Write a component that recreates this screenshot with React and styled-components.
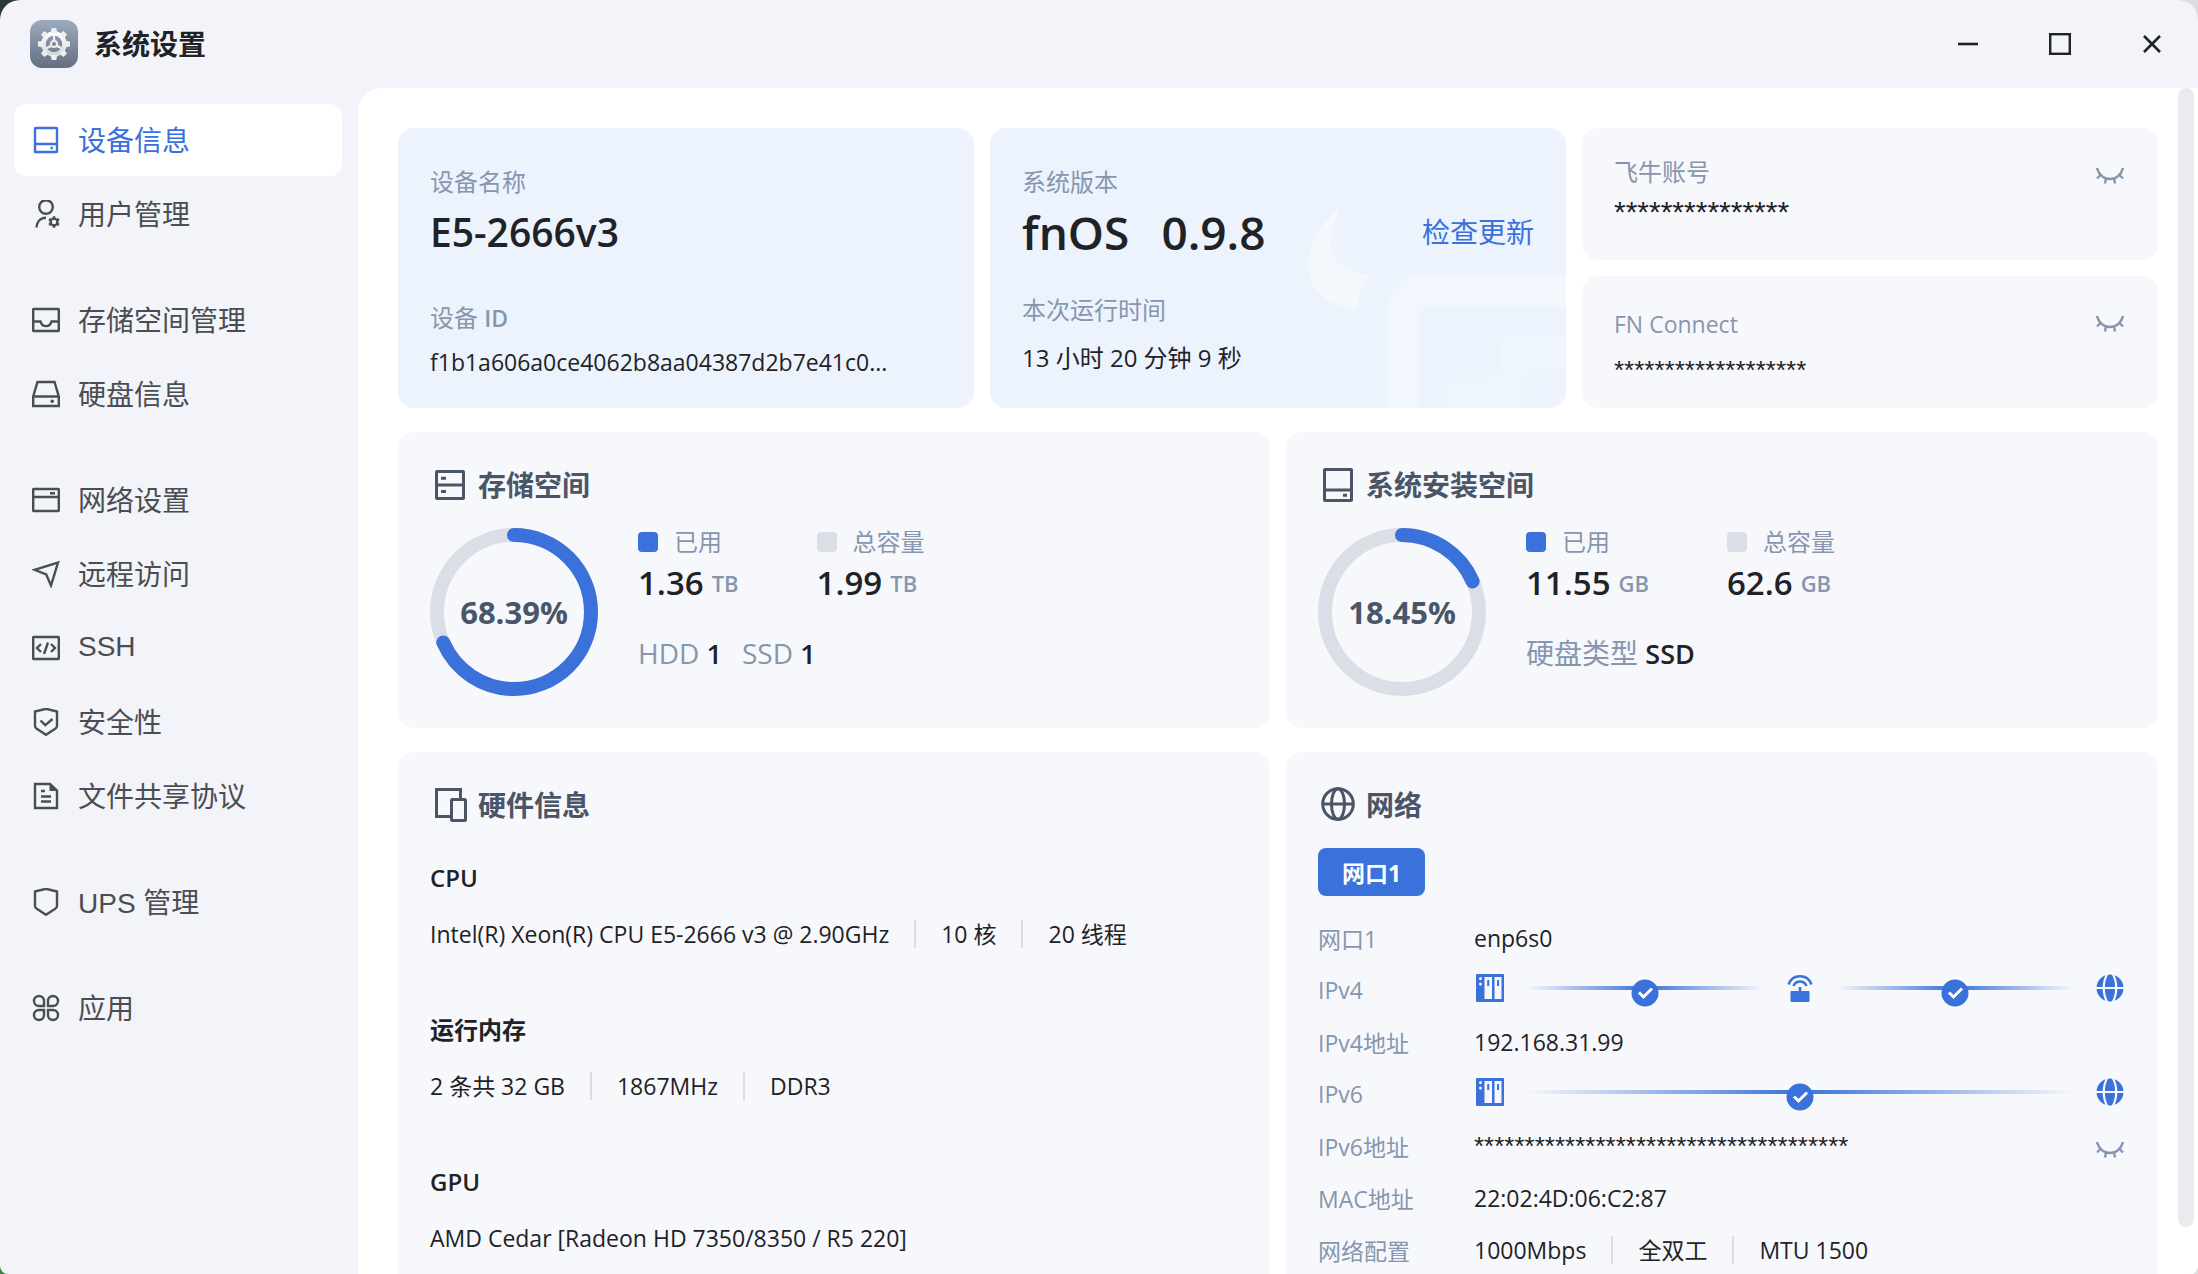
import { useState } from "react";
import styled, { createGlobalStyle } from "styled-components";

const NAV_GROUPS = [
  [
    { id: "device", label: "设备信息" },
    { id: "user", label: "用户管理" },
  ],
  [
    { id: "storage", label: "存储空间管理" },
    { id: "disk", label: "硬盘信息" },
  ],
  [
    { id: "network", label: "网络设置" },
    { id: "remote", label: "远程访问" },
    { id: "ssh", label: "SSH" },
    { id: "security", label: "安全性" },
    { id: "share", label: "文件共享协议" },
  ],
  [{ id: "ups", label: "UPS 管理" }],
  [{ id: "apps", label: "应用" }],
];

const HARDWARE = [
  {
    title: "CPU",
    specs: ["Intel(R) Xeon(R) CPU E5-2666 v3 @ 2.90GHz", "10 核", "20 线程"],
  },
  { title: "运行内存", specs: ["2 条共 32 GB", "1867MHz", "DDR3"] },
  { title: "GPU", specs: ["AMD Cedar [Radeon HD 7350/8350 / R5 220]"] },
];

const SHIELD = "M14 .8 25 3.5V18c0 1.500-.8 2.200-1.800 2.800L14 26.800l-9.200-6C3.800 20.200 3 19.500 3 18V3.500z";

const NAV_ICONS = {
  device: (
    <>
      <rect x="3" y="2" width="22" height="24" rx="0.5" />
      <path d="M3 18h22" />
      <rect x="18.5" y="20.8" width="2.4" height="2.4" fill="currentColor" stroke="none" />
    </>
  ),
  user: (
    <>
      <circle cx="14" cy="7" r="6.8" />
      <path d="M4.5 27.5C4.8 21.5 8.6 17.8 14 17.8" />
      <circle cx="22" cy="22" r="3.4" strokeWidth="2.4" />
      <path
        d="M22 16.2v2M22 25.8v2M17 19.1l1.7 1M25.3 23.9l1.7 1M17 24.9l1.7-1M25.3 20.1l1.7-1"
        strokeWidth="2.6"
      />
    </>
  ),
  storage: (
    <>
      <rect x="1.2" y="3" width="25.6" height="22" rx="0.5" />
      <path d="M1.2 15.5h7.3c.8 3.2 3 4.6 5.5 4.6s4.7-1.4 5.5-4.6h7.3" />
    </>
  ),
  disk: (
    <>
      <path d="M5.5 2h17l4.3 14.5V26H1.2v-9.5zM1.2 16.5h25.6" />
      <circle cx="20.2" cy="21.3" r="1.8" fill="currentColor" stroke="none" />
    </>
  ),
  network: (
    <>
      <rect x="1.2" y="3" width="25.6" height="22" rx="0.5" />
      <path d="M1.2 11h25.6M18 7.200h5" />
    </>
  ),
  remote: <path d="M2.5 9.8 26 2.5 19 25.5l-4.800-11z" />,
  ssh: (
    <>
      <rect x="1.2" y="3" width="25.6" height="22" rx="0.5" />
      <path d="M9 10l-4 4 4 4M19 10l4 4-4 4M16 8.5l-4 11.500" />
    </>
  ),
  security: (
    <>
      <path d={SHIELD} />
      <path d="M8.500 12.500l4.800 4.600L20.500 11" />
    </>
  ),
  share: (
    <>
      <path d="M3 2h15l7 6.500V26H3z" />
      <path d="M17.500 2v7H25z" fill="currentColor" stroke="none" />
      <path d="M9 9h4M9 14.500h10M9 19.500h10" />
    </>
  ),
  ups: <path d={SHIELD} />,
  apps: (
    <>
      <path d="M12 12H7a5 5 0 1 1 5-5zM16 12h5a5 5 0 1 0-5-5z" />
      <path d="M12 16H7a5 5 0 1 0 5 5zM16 16h5a5 5 0 1 1-5 5z" />
    </>
  ),
};

const SECTION_ICONS = {
  storage: (
    <>
      <rect x="6.5" y="5.5" width="27" height="27" rx="0.5" />
      <path d="M6 19h28M11 12.200h5M11 25.500h5" />
    </>
  ),
  system: (
    <>
      <rect x="6.5" y="3.5" width="27" height="31" rx="0.5" />
      <path d="M6 24h28M25 29.200h4" />
    </>
  ),
  hardware: (
    <>
      <path d="M30.5 12V3.500h-24v27H20" />
      <rect x="21.5" y="13.5" width="14" height="21" rx="1" />
    </>
  ),
  globe: (
    <>
      <circle cx="20" cy="18" r="15.300" />
      <ellipse cx="20" cy="18" rx="6.500" ry="15.300" />
      <path d="M5 18h30" />
    </>
  ),
};

const AppLogo = () => (
  <svg width="48" height="48" viewBox="0 0 48 48" aria-hidden="true">
    <defs>
      <linearGradient id="logo-bg" x1="0" y1="0" x2="0" y2="1">
        <stop offset="0" stopColor="#9dabbf" />
        <stop offset="1" stopColor="#646f7e" />
      </linearGradient>
      <linearGradient id="logo-gear" x1="0" y1="0" x2="0" y2="1">
        <stop offset="0" stopColor="#ffffff" />
        <stop offset="1" stopColor="#d5d7db" />
      </linearGradient>
    </defs>
    <rect width="48" height="48" rx="12" fill="url(#logo-bg)" />
    <circle cx="24" cy="24" r="10.5" fill="none" stroke="url(#logo-gear)" strokeWidth="4.500" />
    <g fill="#eceef0">
      {[0, 45, 90, 135, 180, 225, 270, 315].map((angle) => (
        <path key={angle} d="M20.8 13l.8-5h4.800l.8 5z" transform={`rotate(${angle} 24 24)`} />
      ))}
      {[0, 120, 240].map((angle) => (
        <path key={angle} d="M22.600 22l.5-7h1.800l.5 7z" transform={`rotate(${angle} 24 24)`} />
      ))}
    </g>
    <circle cx="24" cy="24" r="3" fill="#7b8798" stroke="#eceef0" strokeWidth="2" />
  </svg>
);

const ClosedEye = () => (
  <svg width="28" height="16" viewBox="0 0 28 16" fill="none" stroke="currentColor" strokeWidth="2.4">
    <path d="M1 0C2.8 6.800 8 11 14 11S25.200 6.800 27 0" />
    <path d="M5 6.500l-4 4M23 6.500l4 4M10 10.500l-1 5M18 10.500l1 5" />
  </svg>
);

const NasIcon = () => (
  <svg width="32" height="32" viewBox="0 0 32 32" fill="#3a71da" aria-hidden="true">
    <rect x="2" y="2" width="28" height="28" rx="1" />
    <path d="M10.500 5h7.500v22h-7.500zM20.500 5h7v22h-7z" fill="#f6f8fc" />
    <circle cx="6.500" cy="6.500" r="1.500" fill="#f6f8fc" />
    <circle cx="6.500" cy="12" r="1.500" fill="#f6f8fc" />
    <path d="M13.200 8h2v6h-2zM23 8h2v6h-2z" />
  </svg>
);

const RouterIcon = () => (
  <svg width="32" height="32" viewBox="0 0 32 32" fill="none" stroke="#3a71da" strokeWidth="2.6" aria-hidden="true">
    <path d="M4.500 12.500C6.500 7 10.500 4.200 16 4.200S25.500 7 27.500 12.500" />
    <path d="M9.500 14c1.200-3 3.500-4.500 6.500-4.500s5.300 1.500 6.500 4.500M16 15v5" />
    <rect x="6.500" y="19" width="19" height="11" rx="1" fill="#3a71da" stroke="none" />
  </svg>
);

const InternetIcon = () => (
  <svg width="32" height="32" viewBox="0 0 32 32" fill="none" stroke="#f6f8fc" strokeWidth="2.2" aria-hidden="true">
    <circle cx="16" cy="16" r="13.500" fill="#3a71da" stroke="none" />
    <path d="M2 16h28M13.500 1.500C8.500 10 8.500 22 13.500 30.500M18.500 1.500c5 8.500 5 20.500 0 29" />
  </svg>
);

const Watermark = () => (
  <WatermarkSvg viewBox="0 0 576 280" width="576" height="280" aria-hidden="true">
    <path
      d="M350 78C335 92 318 115 318 137c0 27 22 43 50 43 0-14 4-25 12-34-25-1-39-12-39-31 0-13 5-27 9-37z"
      opacity="0.45"
    />
    <path d="M576 146H437c-24 0-40 16-40 40v94h32v-91c0-6 4-10 10-10h137z" opacity="0.3" />
    <path
      d="M576 208h-53c-9 0-14 5-14 14v16c0 8-4 12-12 12h-21c-13 0-20 7-20 20v10h80v-30c0-5 3-8 8-8 12 0 22-2 32-7z"
      opacity="0.2"
    />
  </WatermarkSvg>
);

const UsageRing = ({ percent }) => {
  const length = 2 * Math.PI * 77;
  return (
    <Ring>
      <svg width="168" height="168" viewBox="0 0 168 168" fill="none" strokeWidth="14" aria-hidden="true">
        <circle cx="84" cy="84" r="77" stroke="#dbdee6" />
        <circle
          cx="84"
          cy="84"
          r="77"
          stroke="#3a71da"
          strokeLinecap="round"
          strokeDasharray={`${(length * percent) / 100} ${length}`}
          transform="rotate(-90 84 84)"
        />
      </svg>
      <RingText>{percent}%</RingText>
    </Ring>
  );
};

const SectionHeading = ({ icon, children }) => (
  <SectionTitle>
    <svg width="40" height="38" viewBox="0 0 40 38" fill="none" stroke="currentColor" strokeWidth="3" aria-hidden="true">
      {SECTION_ICONS[icon]}
    </svg>
    {children}
  </SectionTitle>
);

const UsageCard = ({ icon, title, percent, used, total, unit, details }) => (
  <Card>
    <SectionHeading icon={icon}>{title}</SectionHeading>
    <UsageBody>
      <UsageRing percent={percent} />
      <div>
        <Stats>
          <div>
            <Legend $color="#3a71da">已用</Legend>
            <Amount>
              {used} <Unit>{unit}</Unit>
            </Amount>
          </div>
          <div>
            <Legend $color="#dbdee6">总容量</Legend>
            <Amount>
              {total} <Unit>{unit}</Unit>
            </Amount>
          </div>
        </Stats>
        <Details>
          {details.map(([name, value]) => (
            <span key={name}>
              {name} <strong>{value}</strong>
            </span>
          ))}
        </Details>
      </div>
    </UsageBody>
  </Card>
);

const LinkLine = () => (
  <Line>
    <Check width="28" height="28" viewBox="0 0 28 28" role="img" aria-label="已连接">
      <circle cx="14" cy="14" r="13.500" fill="#3a71da" />
      <path d="M8 13.500l4.500 4.500 8.500-8.500" fill="none" stroke="#fff" strokeWidth="3" />
    </Check>
  </Line>
);

const SecretCard = ({ label, secret, large }) => (
  <SmallCard>
    <SecretText $large={large}>
      <Label>{large ? label : <LatinText>{label}</LatinText>}</Label>
      <Stars $large={large}>{secret}</Stars>
    </SecretText>
    <EyeButton aria-label={`显示${label}`}>
      <ClosedEye />
    </EyeButton>
  </SmallCard>
);

export default function App() {
  const [active, setActive] = useState("device");

  return (
    <>
      <GlobalStyle />
      <Window>
        <TitleBar>
          <AppLogo />
          <AppTitle>系统设置</AppTitle>
          <WindowButton aria-label="最小化">
            <svg width="20" height="20" viewBox="0 0 20 20" stroke="currentColor" strokeWidth="2.6">
              <path d="M0 10h20" />
            </svg>
          </WindowButton>
          <WindowButton aria-label="最大化">
            <svg width="22" height="22" viewBox="0 0 22 22" fill="none" stroke="currentColor" strokeWidth="2.4">
              <rect x="1.2" y="1.2" width="19.6" height="19.6" />
            </svg>
          </WindowButton>
          <WindowButton aria-label="关闭">
            <svg width="18" height="18" viewBox="0 0 18 18" stroke="currentColor" strokeWidth="2.6">
              <path d="M1 1l16 16M17 1L1 17" />
            </svg>
          </WindowButton>
        </TitleBar>

        <Sidebar>
          {NAV_GROUPS.map((group) => (
            <NavGroup key={group[0].id}>
              {group.map((item) => (
                <NavItem key={item.id} $active={item.id === active} onClick={() => setActive(item.id)}>
                  <svg width="28" height="28" viewBox="0 0 28 28" fill="none" stroke="currentColor" strokeWidth="2.4" aria-hidden="true">
                    {NAV_ICONS[item.id]}
                  </svg>
                  <NavLabel>{item.label}</NavLabel>
                </NavItem>
              ))}
            </NavGroup>
          ))}
        </Sidebar>

        <Content>
          <Scroller>
            <TopRow>
              <InfoCard>
                <Label>设备名称</Label>
                <DeviceName>E5-2666v3</DeviceName>
                <InfoBottom>
                  <Label>
                    设备 <LatinText $bold>ID</LatinText>
                  </Label>
                  <DeviceId>f1b1a606a0ce4062b8aa04387d2b7e41c0...</DeviceId>
                </InfoBottom>
              </InfoCard>

              <InfoCard>
                <Watermark />
                <Label>系统版本</Label>
                <VersionRow>
                  <Version>
                    <span>fnOS</span>
                    <span>0.9.8</span>
                  </Version>
                  <UpdateLink href="#update">检查更新</UpdateLink>
                </VersionRow>
                <InfoBottom $tight>
                  <Label>本次运行时间</Label>
                  <Uptime>13 小时 20 分钟 9 秒</Uptime>
                </InfoBottom>
              </InfoCard>

              <SmallCards>
                <SecretCard label="飞牛账号" secret={"*".repeat(15)} large />
                <SecretCard label="FN Connect" secret={"*".repeat(19)} />
              </SmallCards>
            </TopRow>

            <HalfRow>
              <UsageCard
                icon="storage"
                title="存储空间"
                percent={68.39}
                used="1.36"
                total="1.99"
                unit="TB"
                details={[
                  ["HDD", "1"],
                  ["SSD", "1"],
                ]}
              />
              <UsageCard
                icon="system"
                title="系统安装空间"
                percent={18.45}
                used="11.55"
                total="62.6"
                unit="GB"
                details={[["硬盘类型", "SSD"]]}
              />
            </HalfRow>

            <HalfRow>
              <Card>
                <SectionHeading icon="hardware">硬件信息</SectionHeading>
                <HardwareList>
                  {HARDWARE.map((part) => (
                    <div key={part.title}>
                      <HardwareTitle>{part.title}</HardwareTitle>
                      <Specs>
                        {part.specs.map((spec) => (
                          <li key={spec}>{spec}</li>
                        ))}
                      </Specs>
                    </div>
                  ))}
                </HardwareList>
              </Card>

              <Card>
                <SectionHeading icon="globe">网络</SectionHeading>
                <PortButton>网口1</PortButton>
                <NetList>
                  <dt>网口1</dt>
                  <dd>enp6s0</dd>
                  <dt>IPv4</dt>
                  <dd>
                    <NetPath>
                      <NasIcon />
                      <LinkLine />
                      <RouterIcon />
                      <LinkLine />
                      <InternetIcon />
                    </NetPath>
                  </dd>
                  <dt>IPv4地址</dt>
                  <dd>192.168.31.99</dd>
                  <dt>IPv6</dt>
                  <dd>
                    <NetPath>
                      <NasIcon />
                      <LinkLine />
                      <InternetIcon />
                    </NetPath>
                  </dd>
                  <dt>IPv6地址</dt>
                  <dd>
                    <Stars>{"*".repeat(37)}</Stars>
                    <EyeButton aria-label="显示IPv6地址">
                      <ClosedEye />
                    </EyeButton>
                  </dd>
                  <dt>MAC地址</dt>
                  <dd>22:02:4D:06:C2:87</dd>
                  <dt>网络配置</dt>
                  <dd>
                    <Specs>
                      <li>1000Mbps</li>
                      <li>全双工</li>
                      <li>MTU 1500</li>
                    </Specs>
                  </dd>
                </NetList>
              </Card>
            </HalfRow>
          </Scroller>
          <ScrollThumb />
        </Content>
      </Window>
    </>
  );
}

const GlobalStyle = createGlobalStyle`
  * {
    box-sizing: border-box;
    margin: 0;
    padding: 0;
  }
  body {
    font-family: "Open Sans", "Noto Sans CJK SC", sans-serif;
    color: #1f2226;
    background:
      linear-gradient(180deg, #2c3836 50%, #3a8040 50%) left / 50% 100% no-repeat,
      #dcdde0;
  }
  button {
    border: 0;
    background: none;
    font: inherit;
    color: inherit;
    cursor: pointer;
  }
  svg {
    display: block;
    flex-shrink: 0;
  }
`;
const Window = styled.div`
  display: grid;
  grid-template: 88px minmax(0, 1fr) / 358px minmax(0, 1fr);
  height: 100vh;
  overflow: hidden;
  border-radius: 20px 20px 8px 8px;
  background: #f2f4f9;
`;
const TitleBar = styled.header`
  grid-column: 1 / -1;
  display: flex;
  align-items: center;
  padding-left: 30px;
`;
const AppTitle = styled.h1`
  flex: 1;
  margin-left: 16px;
  font-size: 28px;
  line-height: 40px;
  font-weight: 700;
`;
const WindowButton = styled.button`
  display: flex;
  align-items: center;
  justify-content: center;
  width: 92px;
  height: 88px;
`;
const Sidebar = styled.nav`
  display: flex;
  flex-direction: column;
  gap: 34px;
  padding: 16px 16px 0 14px;
  font-family: "Liberation Sans", "Noto Sans CJK SC", sans-serif;
`;
const NavGroup = styled.div`
  display: flex;
  flex-direction: column;
  gap: 2px;
`;
const NavItem = styled.button`
  display: flex;
  align-items: center;
  gap: 18px;
  height: 72px;
  padding: 0 18px;
  border-radius: 12px;
  font-size: 28px;
  color: ${({ $active }) => ($active ? "#3a71da" : "#4a4d52")};
  background: ${({ $active }) => ($active ? "#fff" : "transparent")};
`;
const NavLabel = styled.span`
  padding-bottom: 2px;
`;
const Content = styled.main`
  position: relative;
  overflow: hidden;
  border-top-left-radius: 24px;
  background: #fff;
`;
const Scroller = styled.div`
  display: flex;
  flex-direction: column;
  gap: 24px;
  height: 100%;
  padding: 40px;
  overflow-y: auto;
  scrollbar-width: none;
`;
const ScrollThumb = styled.div`
  position: absolute;
  top: 0;
  right: 4px;
  width: 16px;
  height: 96%;
  border-radius: 8px;
  background: #e9ebef;
`;
const TopRow = styled.div`
  display: grid;
  grid-template-columns: repeat(3, minmax(0, 1fr));
  gap: 16px;
`;
const HalfRow = styled.div`
  display: grid;
  grid-template-columns: repeat(2, minmax(0, 1fr));
  gap: 16px;
`;
const InfoCard = styled.section`
  position: relative;
  min-height: 280px;
  padding: 38px 32px 30px;
  overflow: hidden;
  border-radius: 16px;
  background: #ecf3fc;
`;
const WatermarkSvg = styled.svg`
  position: absolute;
  right: 0;
  bottom: 0;
  fill: #fff;
`;
const Label = styled.div`
  font-size: 24px;
  line-height: 32px;
  color: #8796ae;
`;
const LatinText = styled.span`
  font-size: 23px;
  font-weight: ${({ $bold }) => ($bold ? 600 : 400)};
`;
const DeviceName = styled.div`
  margin-top: 8px;
  font-size: 39px;
  line-height: 52px;
  font-weight: 600;
`;
const InfoBottom = styled.div`
  display: flex;
  flex-direction: column;
  gap: ${({ $tight }) => ($tight ? "16px" : "12px")};
  margin-top: ${({ $tight }) => ($tight ? "36px" : "44px")};
`;
const DeviceId = styled.div`
  font-size: 23px;
  line-height: 32px;
  white-space: nowrap;
`;
const VersionRow = styled.div`
  position: relative;
  display: flex;
  align-items: center;
  justify-content: space-between;
  margin-top: 8px;
`;
const Version = styled.div`
  display: flex;
  gap: 32px;
  font-size: 46px;
  line-height: 52px;
  font-weight: 600;
`;
const UpdateLink = styled.a`
  font-size: 28px;
  line-height: 40px;
  color: #3a71da;
  text-decoration: none;
`;
const Uptime = styled.div`
  font-size: 24px;
  line-height: 32px;
`;
const SmallCards = styled.div`
  display: grid;
  grid-template-rows: repeat(2, 1fr);
  gap: 16px;
`;
const SmallCard = styled.section`
  display: flex;
  align-items: flex-start;
  justify-content: space-between;
  padding: 28px 32px 0;
  border-radius: 16px;
  background: #f6f8fc;
`;
const SecretText = styled.div`
  display: flex;
  flex-direction: column;
  gap: ${({ $large }) => ($large ? "4px" : "10px")};
  padding-top: ${({ $large }) => ($large ? "0" : "4px")};
`;
const Stars = styled.div`
  font-family: "Liberation Sans", sans-serif;
  font-size: ${({ $large }) => ($large ? "30px" : "26px")};
  line-height: 40px;
`;
const EyeButton = styled.button`
  display: flex;
  align-items: center;
  justify-content: center;
  width: 32px;
  height: 32px;
  padding-top: 8px;
  color: #8796ae;
`;
const Card = styled.section`
  padding: 34px 32px 32px;
  border-radius: 16px;
  background: #f6f8fc;
`;
const SectionTitle = styled.h2`
  display: flex;
  align-items: center;
  gap: 8px;
  font-size: 28px;
  line-height: 38px;
  font-weight: 700;
  color: #4a5567;
`;
const UsageBody = styled.div`
  display: flex;
  gap: 40px;
  margin-top: 24px;
`;
const Ring = styled.div`
  display: grid;
  place-items: center;
  & > * {
    grid-area: 1 / 1;
  }
`;
const RingText = styled.span`
  font-size: 31px;
  font-weight: 700;
  color: #4a5567;
`;
const Stats = styled.div`
  display: flex;
  gap: 78px;
`;
const Legend = styled.div`
  display: flex;
  align-items: center;
  gap: 16px;
  font-size: 24px;
  line-height: 28px;
  color: #8796ae;
  &::before {
    content: "";
    width: 20px;
    height: 20px;
    border-radius: 4px;
    background: ${({ $color }) => $color};
  }
`;
const Amount = styled.div`
  display: flex;
  align-items: center;
  gap: 8px;
  margin-top: 5px;
  font-size: 33px;
  line-height: 44px;
  font-weight: 600;
`;
const Unit = styled.span`
  font-size: 22px;
  color: #8796ae;
`;
const Details = styled.div`
  display: flex;
  gap: 20px;
  margin-top: 30px;
  font-size: 28px;
  line-height: 36px;
  color: #8796ae;
  strong {
    font-size: 27px;
    font-weight: 600;
    color: #1f2226;
  }
`;
const HardwareList = styled.div`
  display: flex;
  flex-direction: column;
  gap: 64px;
  margin-top: 38px;
`;
const HardwareTitle = styled.h3`
  margin-bottom: 24px;
  font-size: 24px;
  line-height: 32px;
  font-weight: 600;
`;
const Specs = styled.ul`
  display: flex;
  align-items: center;
  list-style: none;
  font-size: 23px;
  line-height: 32px;
  white-space: nowrap;
  li {
    display: flex;
    align-items: center;
  }
  li + li::before {
    content: "";
    width: 2px;
    height: 28px;
    margin: 0 25px;
    background: #dadde3;
  }
`;
const PortButton = styled.button`
  height: 48px;
  margin-top: 24px;
  padding: 0 24px;
  border-radius: 8px;
  font-size: 23px;
  font-weight: 700;
  color: #fff;
  background: #3a71da;
`;
const NetList = styled.dl`
  display: grid;
  grid-template-columns: 156px minmax(0, 1fr);
  grid-auto-rows: 52px;
  align-items: center;
  margin-top: 16px;
  font-size: 23px;
  dt {
    color: #8796ae;
  }
  dd {
    display: flex;
    align-items: center;
    justify-content: space-between;
  }
`;
const NetPath = styled.div`
  flex: 1;
  display: flex;
  align-items: center;
  gap: 20px;
  padding-bottom: 4px;
`;
const Line = styled.div`
  position: relative;
  flex: 1;
  height: 4px;
  background: linear-gradient(90deg, transparent, #3a71da, transparent);
`;
const Check = styled.svg`
  position: absolute;
  left: calc(50% - 14px);
  top: -7px;
`;
